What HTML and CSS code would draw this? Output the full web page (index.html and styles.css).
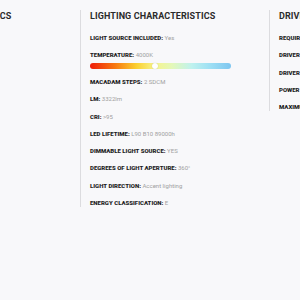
FILE: index.html
```html
<!DOCTYPE html>
<html>
<head>
<meta charset="utf-8">
<link rel="stylesheet" href="styles.css">
</head>
<body>
<div class="specs">
  <section class="col">
    <h2 class="title">BASIC CHARACTERISTICS</h2>
  </section>
  <section class="col">
    <h2 class="title">LIGHTING CHARACTERISTICS</h2>
    <p class="row"><b>LIGHT SOURCE INCLUDED:</b> Yes</p>
    <p class="row"><b>TEMPERATURE:</b> 4000K</p>
    <div class="temp-bar"><span class="knob"></span></div>
    <p class="row"><b>MACADAM STEPS:</b> 2 SDCM</p>
    <p class="row"><b>LM:</b> 3322lm</p>
    <p class="row"><b>CRI:</b> &gt;95</p>
    <p class="row"><b>LED LIFETIME:</b> L90 B10 89000h</p>
    <p class="row"><b>DIMMABLE LIGHT SOURCE:</b> YES</p>
    <p class="row"><b>DEGREES OF LIGHT APERTURE:</b> 360°</p>
    <p class="row"><b>LIGHT DIRECTION:</b> Accent lighting</p>
    <p class="row"><b>ENERGY CLASSIFICATION:</b> E</p>
  </section>
  <section class="col">
    <h2 class="title">DRIVER CHARACTERISTICS</h2>
    <p class="row"><b>REQUIRED DRIVER:</b> Yes</p>
    <p class="row"><b>DRIVER INCLUDED:</b> Yes</p>
    <p class="row"><b>DRIVER TYPE:</b> DALI</p>
    <p class="row"><b>POWER SUPPLY:</b> 220-240V</p>
    <p class="row"><b>MAXIMUM POWER:</b> 30W</p>
  </section>
</div>
</body>
</html>
```
FILE: styles.css
```css
html, body {
  margin: 0;
  padding: 0;
  background: #f8f8fa;
  overflow: hidden;
}
body {
  width: 300px;
  height: 300px;
  font-family: Roboto, "Liberation Sans", sans-serif;
}
.specs {
  display: flex;
  align-items: flex-start;
  margin: 10px 0 0 -109px;
}
.col {
  flex: 0 0 189px;
  box-sizing: border-box;
  border-left: 1px solid #dcdcdf;
  padding-left: 9px;
  white-space: nowrap;
}
.title {
  margin: 0 0 12px;
  font-size: 9px;
  line-height: 12px;
  font-weight: 700;
  color: #2b2b2b;
  letter-spacing: 0.1px;
}
.row {
  margin: 9px 0 0;
  font-size: 6px;
  line-height: 8.25px;
  color: #a0a0a0;
}
.row b {
  font-weight: 900;
  color: #1e1e1e;
}
.temp-bar {
  position: relative;
  width: 141px;
  height: 6px;
  margin-top: 3.5px;
  border-radius: 3px;
  background: linear-gradient(to right, #ee1c0a 0%, #f87a10 18%, #fbd030 33%, #f6f48c 46%, #e4f8b8 58%, #bff2ee 72%, #9ee0f4 85%, #7ec6f0 100%);
}
.knob {
  position: absolute;
  left: 62px;
  top: 0;
  width: 6px;
  height: 6px;
  border-radius: 50%;
  background: #fff;
  box-shadow: 0 0 1px rgba(0,0,0,0.25);
}
```
